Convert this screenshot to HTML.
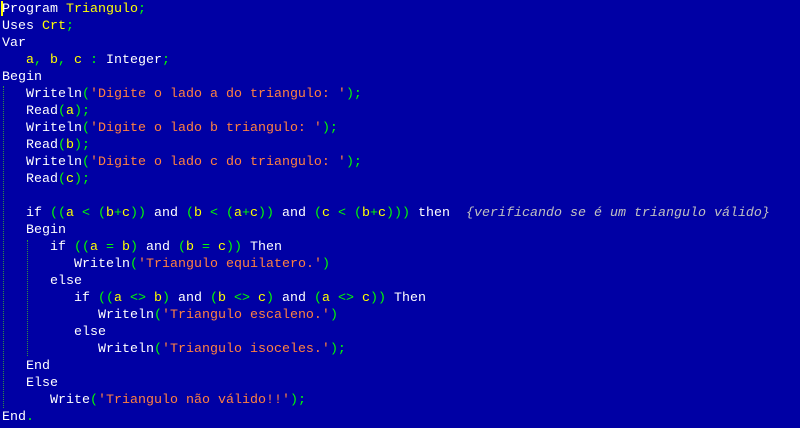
<!DOCTYPE html><html><head><style>
body{margin:0;width:800px;height:428px;background:#0000a4;overflow:hidden;position:relative}
pre{margin:0;position:absolute;left:2px;top:1px;font-family:"Liberation Mono",monospace;font-size:13.33px;line-height:17px;color:#fff}
.y{color:#ffff00}.g{color:#00ff00}.o{color:#ff8040}.c{color:#c0c0c0;font-style:italic}
.d{position:absolute;width:0;border-left:1px dotted #2f8f3f}
</style></head><body>
<div style="position:absolute;left:1px;top:1px;width:2px;height:15px;background:#ffff00"></div>
<div class="d" style="left:3px;top:86px;height:322px"></div>
<div class="d" style="left:27px;top:240px;height:116px"></div>
<pre>Program <span class="y">Triangulo</span><span class="g">;</span>
Uses <span class="y">Crt</span><span class="g">;</span>
Var
   <span class="y">a</span><span class="g">,</span> <span class="y">b</span><span class="g">,</span> <span class="y">c</span> <span class="g">:</span> Integer<span class="g">;</span>
Begin
   Writeln<span class="g">(</span><span class="o">'Digite o lado a do triangulo: '</span><span class="g">);</span>
   Read<span class="g">(</span><span class="y">a</span><span class="g">);</span>
   Writeln<span class="g">(</span><span class="o">'Digite o lado b triangulo: '</span><span class="g">);</span>
   Read<span class="g">(</span><span class="y">b</span><span class="g">);</span>
   Writeln<span class="g">(</span><span class="o">'Digite o lado c do triangulo: '</span><span class="g">);</span>
   Read<span class="g">(</span><span class="y">c</span><span class="g">);</span>

   if <span class="g">((</span><span class="y">a</span> <span class="g">&lt;</span> <span class="g">(</span><span class="y">b</span><span class="g">+</span><span class="y">c</span><span class="g">))</span> and <span class="g">(</span><span class="y">b</span> <span class="g">&lt;</span> <span class="g">(</span><span class="y">a</span><span class="g">+</span><span class="y">c</span><span class="g">))</span> and <span class="g">(</span><span class="y">c</span> <span class="g">&lt;</span> <span class="g">(</span><span class="y">b</span><span class="g">+</span><span class="y">c</span><span class="g">)))</span> then  <span class="c">{verificando se é um triangulo válido}</span>
   Begin
      if <span class="g">((</span><span class="y">a</span> <span class="g">=</span> <span class="y">b</span><span class="g">)</span> and <span class="g">(</span><span class="y">b</span> <span class="g">=</span> <span class="y">c</span><span class="g">))</span> Then
         Writeln<span class="g">(</span><span class="o">'Triangulo equilatero.'</span><span class="g">)</span>
      else
         if <span class="g">((</span><span class="y">a</span> <span class="g">&lt;&gt;</span> <span class="y">b</span><span class="g">)</span> and <span class="g">(</span><span class="y">b</span> <span class="g">&lt;&gt;</span> <span class="y">c</span><span class="g">)</span> and <span class="g">(</span><span class="y">a</span> <span class="g">&lt;&gt;</span> <span class="y">c</span><span class="g">))</span> Then
            Writeln<span class="g">(</span><span class="o">'Triangulo escaleno.'</span><span class="g">)</span>
         else
            Writeln<span class="g">(</span><span class="o">'Triangulo isoceles.'</span><span class="g">);</span>
   End
   Else
      Write<span class="g">(</span><span class="o">'Triangulo não válido!!'</span><span class="g">);</span>
End<span class="g">.</span></pre>
</body></html>
